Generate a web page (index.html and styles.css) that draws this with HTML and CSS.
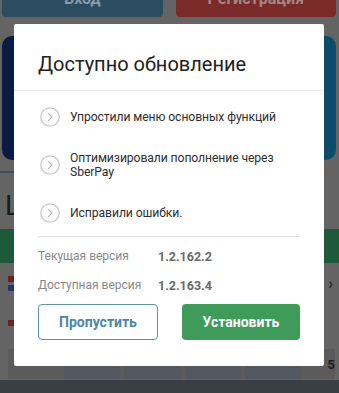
FILE: index.html
```html
<!DOCTYPE html>
<html lang="ru">
<head>
<meta charset="utf-8">
<link rel="stylesheet" href="styles.css">
</head>
<body>
<div class="app">
  <div class="auth">
    <div class="auth-btn login">Вход</div>
    <div class="auth-btn register">Регистрация</div>
  </div>
  <div class="banner"></div>
  <div class="dots"></div>
  <div class="section-title">L</div>
  <div class="green-bar"></div>
  <div class="rows">
    <div class="row">
      <div class="flags"><span class="flag red"></span><span class="flag blue"></span></div>
      <span class="chev">›</span>
    </div>
    <div class="row">
      <div class="flags"><span class="flag red"></span></div>
    </div>
  </div>
  <div class="odds">
    <span class="odd"></span><span class="odd"></span><span class="odd"></span><span class="odd"></span><span class="odd last">5</span>
  </div>
  <div class="bottom-bar"></div>
</div>

<div class="dialog">
  <div class="dialog-head">Доступно обновление</div>
  <ul class="changes">
    <li class="change">
      <span class="ico"><svg viewBox="0 0 20 20" width="20" height="20"><circle cx="10" cy="10" r="9.2" fill="none" stroke="#c8c8c8" stroke-width="1.2"/><path d="M8.6 6.6 L11.9 10 L8.6 13.4" fill="none" stroke="#b4b4b4" stroke-width="1.1" stroke-linecap="round" stroke-linejoin="round"/></svg></span>
      <span class="change-text">Упростили меню основных функций</span>
    </li>
    <li class="change">
      <span class="ico"><svg viewBox="0 0 20 20" width="20" height="20"><circle cx="10" cy="10" r="9.2" fill="none" stroke="#c8c8c8" stroke-width="1.2"/><path d="M8.6 6.6 L11.9 10 L8.6 13.4" fill="none" stroke="#b4b4b4" stroke-width="1.1" stroke-linecap="round" stroke-linejoin="round"/></svg></span>
      <span class="change-text">Оптимизировали пополнение через SberPay</span>
    </li>
    <li class="change">
      <span class="ico"><svg viewBox="0 0 20 20" width="20" height="20"><circle cx="10" cy="10" r="9.2" fill="none" stroke="#c8c8c8" stroke-width="1.2"/><path d="M8.6 6.6 L11.9 10 L8.6 13.4" fill="none" stroke="#b4b4b4" stroke-width="1.1" stroke-linecap="round" stroke-linejoin="round"/></svg></span>
      <span class="change-text">Исправили ошибки.</span>
    </li>
  </ul>
  <div class="versions">
    <div class="ver"><span class="ver-label">Текущая версия</span><span class="ver-value">1.2.162.2</span></div>
    <div class="ver"><span class="ver-label">Доступная версия</span><span class="ver-value">1.2.163.4</span></div>
  </div>
  <div class="actions">
    <button class="btn skip">Пропустить</button>
    <button class="btn install">Установить</button>
  </div>
</div>
</body>
</html>
```
FILE: styles.css
```css
* { box-sizing: border-box; }
html, body { margin: 0; padding: 0; }
body {
  width: 339px;
  height: 393px;
  overflow: hidden;
  font-family: Roboto, "Noto Sans", sans-serif;
  background: #646464;
}
.app {
  height: 393px;
  display: flex;
  flex-direction: column;
  background: #646464;
}
.auth {
  display: flex;
  gap: 13px;
  padding: 0 3px 0 2px;
  margin-top: -21px;
}
.auth-btn {
  flex: 1;
  height: 38px;
  border-radius: 0 0 4px 4px;
  display: flex;
  align-items: center;
  justify-content: center;
  font-weight: 700;
  font-size: 16px;
  color: #8a9aa6;
}
.login { background: #2c4c61; }
.register { background: #7a2b29; color: #a58583; }
.banner {
  margin: 19px 3px 0 2px;
  height: 124px;
  border-radius: 10px;
  background: linear-gradient(90deg, #0a1a42 0%, #0c3058 55%, #0e4c6a 100%);
}
.dots {
  margin: 11px 0 0 0;
  width: 16px;
  height: 2px;
  background: #3d4f66;
}
.section-title {
  margin: 20px 0 0 5px;
  height: 26px;
  font-size: 28px;
  line-height: 26px;
  color: #1b1b1b;
}
.green-bar {
  margin-top: 10px;
  height: 34px;
  background: #1e5a3a;
}
.rows {
  display: flex;
  flex-direction: column;
}
.row {
  height: 40px;
  display: flex;
  align-items: center;
  justify-content: space-between;
  padding: 0 6px 0 8px;
}
.flags { display: flex; flex-direction: column; gap: 3px; }
.flag { display: block; width: 6px; height: 6px; }
.flag.red { background: #6e1f1f; }
.flag.blue { background: #27366a; }
.chev { color: #2a2a2a; font-size: 16px; font-weight: 700; }
.odds {
  margin: 6px 4px 0 8px;
  height: 30px;
  display: flex;
  gap: 4px;
  padding-left: 56px;
  background: #5b5b5b;
}
.odd { flex: 1; background: #535860; }
.odd.last {
  background: transparent;
  color: #1a1a1a;
  font-weight: 700;
  font-size: 13px;
  display: flex;
  align-items: center;
  justify-content: flex-end;
  flex: 0 0 30px;
}
.bottom-bar {
  margin-top: auto;
  height: 13px;
  background: #3a3e45;
}

/* dialog */
.dialog {
  position: absolute;
  left: 14px;
  top: 24px;
  width: 310px;
  height: 342px;
  background: #ffffff;
  border-radius: 2px;
  display: flex;
  flex-direction: column;
}
.dialog-head {
  height: 67px;
  padding: 28px 24px 0 24px;
  font-size: 20px;
  line-height: 24px;
  color: #212121;
  border-bottom: 1px solid #ebebeb;
}
.changes {
  list-style: none;
  margin: 0 24px;
  padding: 16px 0 13px 0;
  display: flex;
  flex-direction: column;
  gap: 23.5px;
  border-bottom: 1px solid #e4e4e4;
}
.change {
  display: flex;
  align-items: center;
  gap: 10px;
}
.ico { flex: 0 0 20px; height: 20px; display: block; margin-left: 2px; }
.ico svg { display: block; }
.change-text {
  font-size: 12.2px;
  letter-spacing: -0.1px;
  line-height: 14.5px;
  color: #2f2f2f;
  padding-right: 14px;
}
.versions {
  margin: 0 24px;
  padding-top: 12px;
  display: flex;
  flex-direction: column;
  gap: 14px;
}
.ver { display: flex; font-size: 12px; line-height: 15px; }
.ver-label { width: 120px; color: #8a8a8a; }
.ver-value { color: #6a6a6a; font-weight: 700; font-size: 12.5px; }
.actions {
  margin: 11px 24px 0 24px;
  display: flex;
  gap: 24px;
}
.btn {
  flex: 1;
  height: 36px;
  border-radius: 4px;
  font-family: Roboto, "Noto Sans", sans-serif;
  font-size: 14px;
  font-weight: 700;
  padding: 0;
}
.skip {
  background: #fff;
  border: 1px solid #5f93a3;
  color: #4b87a9;
}
.install {
  background: #3e9b5a;
  border: none;
  color: #ffffff;
}
```
